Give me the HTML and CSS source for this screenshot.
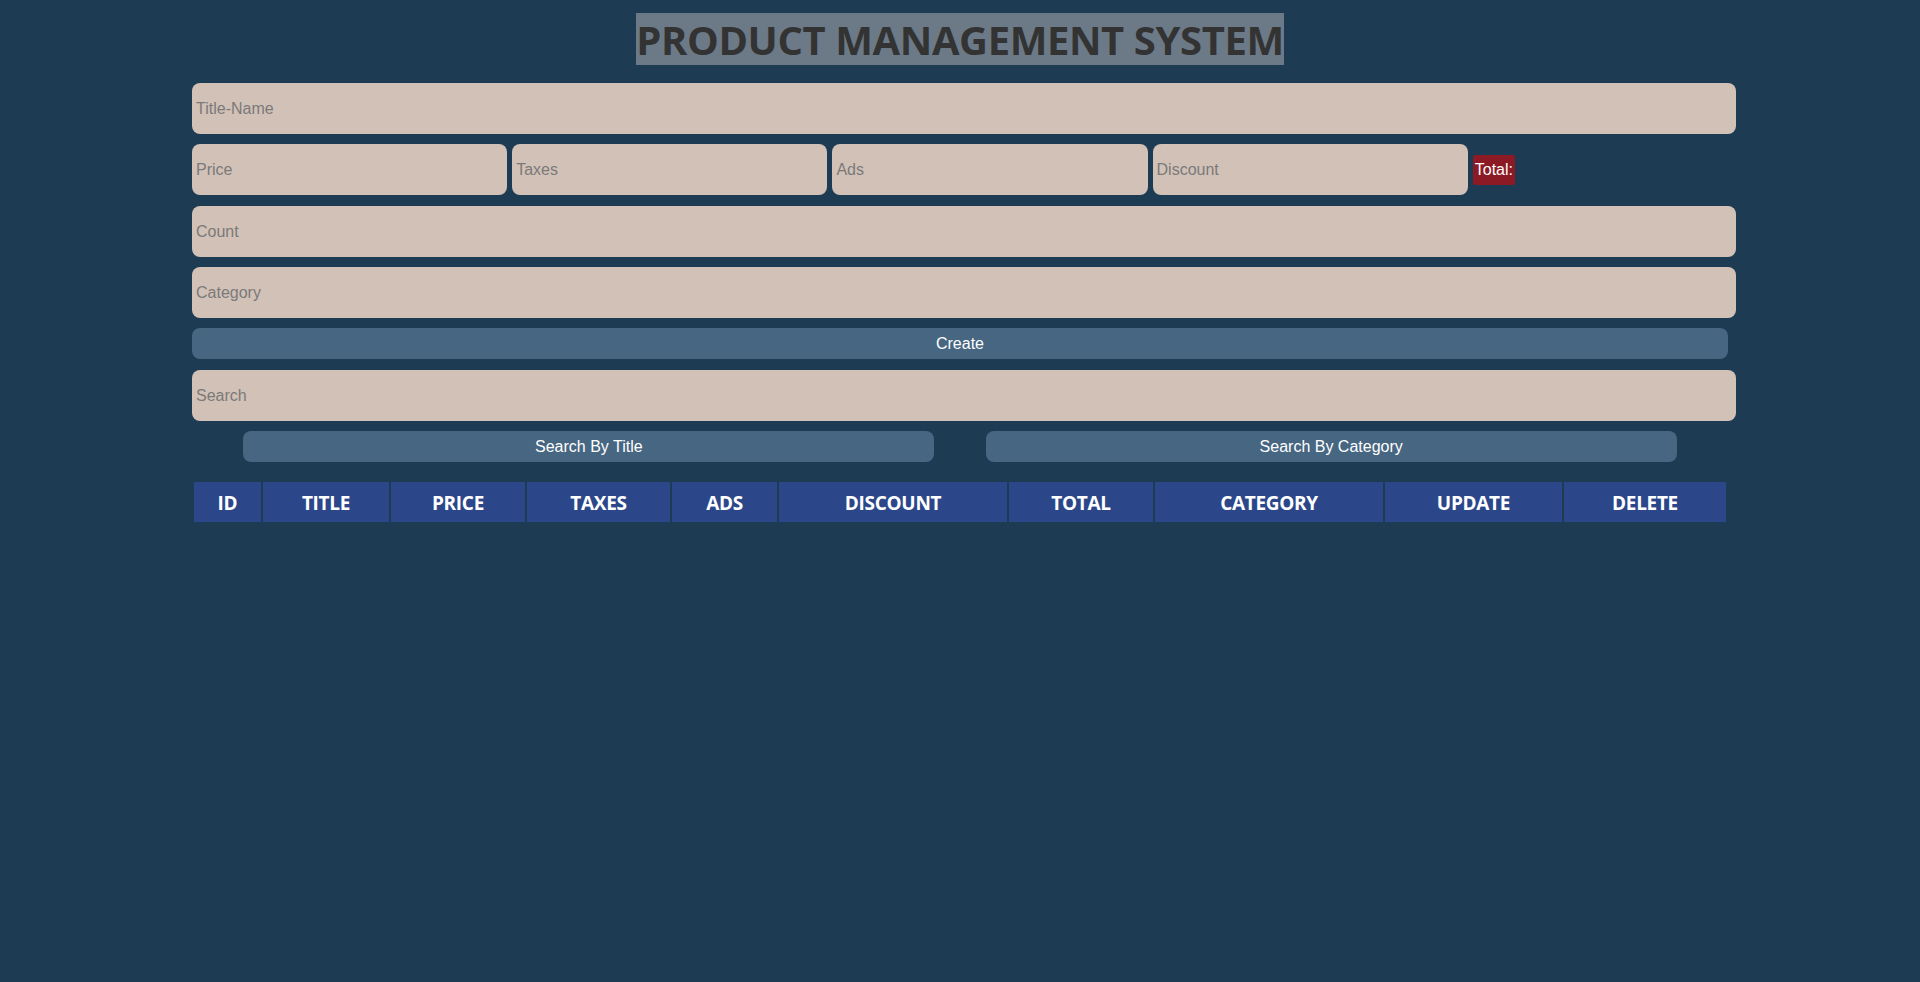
FILE: index.html
```html
<!DOCTYPE html>
<html lang="en">
<head>
<meta charset="UTF-8">
<title>Product Management System</title>
<link rel="stylesheet" href="styles.css">
</head>
<body>
<div class="crud">
  <div class="head">
    <h1 class="title">PRODUCT MANAGEMENT SYSTEM</h1>
  </div>
  <div class="inputs">
    <input class="field" type="text" placeholder="Title-Name">
    <div class="price">
      <input class="field small" type="number" placeholder="Price">
      <input class="field small" type="number" placeholder="Taxes">
      <input class="field small" type="number" placeholder="Ads">
      <input class="field small" type="number" placeholder="Discount">
      <small class="total">Total:</small>
    </div>
    <input class="field" type="number" placeholder="Count">
    <input class="field" type="text" placeholder="Category">
    <button class="btn create">Create</button>
  </div>
  <div class="search-block">
    <input class="field" type="text" placeholder="Search">
    <div class="btn-search">
      <button class="btn half">Search By Title</button>
      <button class="btn half">Search By Category</button>
    </div>
  </div>
  <div class="outputs">
    <table class="table">
      <colgroup>
        <col class="c-id"><col class="c-title"><col class="c-price"><col class="c-taxes"><col class="c-ads">
        <col class="c-discount"><col class="c-total"><col class="c-category"><col class="c-update"><col class="c-delete">
      </colgroup>
      <thead>
        <tr>
          <th>id</th><th>title</th><th>price</th><th>taxes</th><th>ads</th>
          <th>discount</th><th>total</th><th>category</th><th>update</th><th>delete</th>
        </tr>
      </thead>
      <tbody></tbody>
    </table>
  </div>
</div>
</body>
</html>
```

FILE: styles.css
```css
* {
  margin: 0;
  padding: 0;
}

body {
  background: #1d3b53;
  font-family: "Liberation Sans", Arial, sans-serif;
  font-size: 16px;
  min-height: 982px;
}

.crud {
  width: 80%;
  margin: 0 auto;
}

.head {
  display: flex;
  justify-content: center;
  padding-top: 13px;
  margin-bottom: 18px;
}

.title {
  background: #6c7a88;
  color: #333333;
  font-family: "Open Sans", "Segoe UI", sans-serif;
  font-weight: 700;
  font-size: 40px;
  line-height: 52px;
  height: 52px;
  padding-top: 1px;
  box-sizing: border-box;
  letter-spacing: -0.4px;
}

.field {
  display: block;
  width: 100%;
  height: 51px;
  padding: 0 4px;
  border: none;
  outline: none;
  border-radius: 8px;
  background: #d2c1b6;
  color: #333;
  font-family: "Liberation Sans", Arial, sans-serif;
  font-size: 16px;
  margin-bottom: 10px;
}

.field::placeholder {
  color: #7a7a7a;
}

.price {
  display: flex;
  align-items: center;
  gap: 5px;
  margin-bottom: 11px;
}

.price .field.small {
  width: 20%;
  margin-bottom: 0;
}

.total {
  background: #8b1a24;
  color: #ffffff;
  font-size: 16px;
  padding: 6px 2px;
  border-radius: 2px;
  line-height: 18px;
}

.btn {
  display: block;
  height: 31px;
  border: none;
  border-radius: 8px;
  background: #466682;
  color: #ffffff;
  font-family: "Liberation Sans", Arial, sans-serif;
  font-size: 16px;
  cursor: pointer;
}

.create {
  width: 100%;
  margin-bottom: 11px;
}

.search-block .field {
  margin-bottom: 10px;
}

.btn-search {
  display: flex;
  justify-content: space-evenly;
}

.btn.half {
  width: 45%;
}

.outputs {
  margin-top: 18px;
}

.table {
  width: 100%;
  table-layout: fixed;
  border-spacing: 2px;
}

.table th {
  height: 40px;
  padding-top: 2px;
  box-sizing: border-box;
  background: #2b4789;
  color: #ffffff;
  font-family: "Open Sans", "Segoe UI", sans-serif;
  font-weight: 700;
  font-size: 19px;
  text-transform: uppercase;
  text-align: center;
  letter-spacing: -0.3px;
}

.c-id { width: 67px; }
.c-title { width: 126px; }
.c-price { width: 134px; }
.c-taxes { width: 143px; }
.c-ads { width: 105px; }
.c-discount { width: 228px; }
.c-total { width: 144px; }
.c-category { width: 228px; }
.c-update { width: 177px; }
.c-delete { width: 162px; }
```
